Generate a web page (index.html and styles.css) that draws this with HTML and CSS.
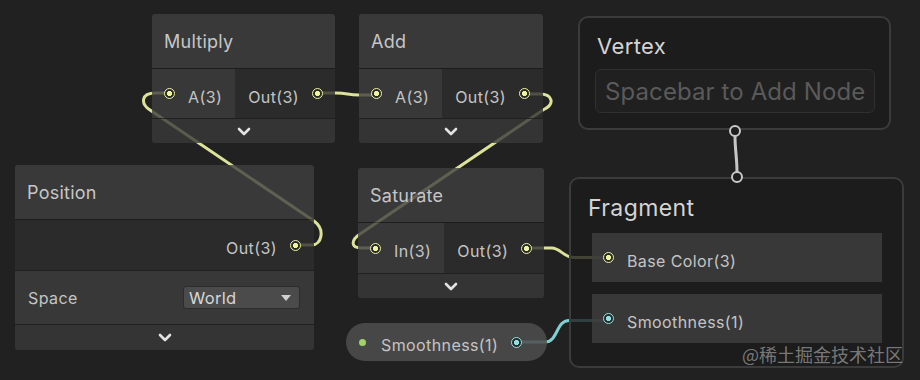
FILE: index.html
```html
<!DOCTYPE html>
<html lang="en">
<head>
    <meta charset="UTF-8">
    <meta name="viewport" content="width=device-width, initial-scale=1.0">
    <title>Shader Graph</title>
    <link rel="stylesheet" href="styles.css">
</head>
<body>
    <div class="graph">
        <!-- edges sit under the nodes, nodes are a bit see-through -->
        <svg class="wires" width="920" height="380" viewBox="0 0 920 380">
            <path class="wire wire-v3" d="M296 245 H312 C321 245 326 230 314 221 L150 110 C141 104 140 93 156 93 H169"/>
            <path class="wire wire-v3" d="M316 93 H336 C348 93 347 95 359 95 H377"/>
            <path class="wire wire-v3" d="M524 94 H540 C552 94 556 104 543 110 L360 234 C351 240 350 248 362 248 H376"/>
            <path class="wire wire-v3" d="M526 248 H552 C560 248 564 257.5 574 257.5 H609"/>
            <path class="wire wire-v1" d="M517 342 H545 C558 342 556 320.5 569 320.5 H609"/>
        </svg>

        <div class="node node-multiply">
            <div class="node-title">Multiply</div>
            <div class="node-ports">
                <div class="inputs"><span class="port port-v3"></span><span class="label">A(3)</span></div>
                <div class="outputs"><span class="label">Out(3)</span><span class="port port-v3"></span></div>
            </div>
            <div class="node-collapse">
                <svg width="14" height="9" viewBox="0 0 14 9"><path class="chevron" d="M2 2 L7 7 L12 2"/></svg>
            </div>
        </div>

        <div class="node node-add">
            <div class="node-title">Add</div>
            <div class="node-ports">
                <div class="inputs"><span class="port port-v3"></span><span class="label">A(3)</span></div>
                <div class="outputs"><span class="label">Out(3)</span><span class="port port-v3"></span></div>
            </div>
            <div class="node-collapse">
                <svg width="14" height="9" viewBox="0 0 14 9"><path class="chevron" d="M2 2 L7 7 L12 2"/></svg>
            </div>
        </div>

        <div class="node node-position">
            <div class="node-title">Position</div>
            <div class="node-ports ports-tall">
                <div class="outputs"><span class="label">Out(3)</span><span class="port port-v3"></span></div>
            </div>
            <div class="node-field">
                <span class="field-name">Space</span>
                <div class="dropdown"><span>World</span><span class="dropdown-arrow"></span></div>
            </div>
            <div class="node-collapse collapse-tall">
                <svg width="14" height="9" viewBox="0 0 14 9"><path class="chevron" d="M2 2 L7 7 L12 2"/></svg>
            </div>
        </div>

        <div class="node node-saturate">
            <div class="node-title">Saturate</div>
            <div class="node-ports ports-tall">
                <div class="inputs"><span class="port port-v3"></span><span class="label">In(3)</span></div>
                <div class="outputs"><span class="label">Out(3)</span><span class="port port-v3"></span></div>
            </div>
            <div class="node-collapse">
                <svg width="14" height="9" viewBox="0 0 14 9"><path class="chevron" d="M2 2 L7 7 L12 2"/></svg>
            </div>
        </div>

        <div class="context context-vertex">
            <div class="context-title">Vertex</div>
            <div class="context-empty">Spacebar to Add Node</div>
        </div>

        <div class="context context-fragment">
            <div class="context-title">Fragment</div>
            <div class="block"><span class="port port-v3"></span><span class="label">Base Color(3)</span></div>
            <div class="block"><span class="port port-v1"></span><span class="label">Smoothness(1)</span></div>
        </div>

        <div class="property">
            <span class="property-dot"></span>
            <span class="label property-name">Smoothness(1)</span>
            <span class="port port-v1"></span>
        </div>

        <svg class="overlay" width="920" height="380" viewBox="0 0 920 380">
            <path class="flow" d="M735 136 C735 150 737 158 737 172"/>
            <circle class="flow-port" cx="735" cy="131" r="5"/>
            <circle class="flow-port" cx="737" cy="177" r="5"/>
        </svg>

        <div class="watermark">@稀土掘金技术社区</div>
    </div>
</body>
</html>
```

FILE: styles.css
```css
* {
    box-sizing: border-box;
    margin: 0;
    padding: 0;
}

body {
    background: #212121;
    font-family: Inter, "Noto Sans", sans-serif;
    color: #c4c4c4;
}

.graph {
    position: relative;
    width: 920px;
    height: 380px;
    overflow: hidden;
    background: #212121;
}

.wires,
.overlay {
    position: absolute;
    left: 0;
    top: 0;
}

.overlay {
    z-index: 3;
}

.wire {
    fill: none;
    stroke-width: 3;
    stroke-linecap: round;
    stroke-linejoin: round;
}

.wire-v3 {
    stroke: #dce29a;
}

.wire-v1 {
    stroke: #80cfd1;
}

.flow {
    fill: none;
    stroke: #c6c6c6;
    stroke-width: 3;
    stroke-linecap: round;
}

.flow-port {
    fill: #1e1e1e;
    stroke: #c8c8c8;
    stroke-width: 2;
}

.label {
    padding-top: 6px;
    font-size: 16px;
    letter-spacing: 0.4px;
    white-space: nowrap;
}

/* nodes */
.node {
    position: absolute;
    z-index: 1;
    display: flex;
    flex-direction: column;
    border-radius: 3px;
    overflow: hidden;
}

.node-multiply { left: 152px; top: 14px; width: 183px; }
.node-add { left: 359px; top: 14px; width: 184px; }
.node-position { left: 15px; top: 165px; width: 299px; }
.node-saturate { left: 358px; top: 168px; width: 186px; }

.node-title {
    height: 54px;
    display: flex;
    align-items: center;
    padding: 0 12px;
    background: rgba(64, 64, 64, 0.8);
    font-size: 18px;
    letter-spacing: 0.25px;
    color: #c6c6c6;
}

.node-ports {
    height: 50px;
    display: flex;
    border-top: 1px solid rgba(28, 28, 28, 0.8);
}

.ports-tall {
    height: 51px;
}

.inputs {
    display: flex;
    align-items: center;
    gap: 13px;
    padding: 0 13px 0 12px;
    background: rgba(62, 62, 62, 0.8);
}

.outputs {
    flex: 1;
    display: flex;
    align-items: center;
    justify-content: flex-end;
    gap: 13px;
    padding: 0 13px;
    background: rgba(46, 46, 46, 0.8);
}

.node-field {
    height: 54px;
    display: flex;
    align-items: center;
    justify-content: space-between;
    padding: 0 14px 0 13px;
    background: rgba(62, 62, 62, 0.8);
    border-top: 1px solid rgba(28, 28, 28, 0.8);
}

.field-name {
    font-size: 16px;
    letter-spacing: 0.4px;
}

.dropdown {
    width: 117px;
    height: 23px;
    display: flex;
    align-items: center;
    justify-content: space-between;
    padding: 0 8px 0 5px;
    background: #4b4b4b;
    border: 1px solid #2c2c2c;
    border-radius: 3px;
    color: #d6d6d6;
    font-size: 16.5px;
    letter-spacing: 0.3px;
}

.dropdown-arrow {
    width: 0;
    height: 0;
    border-left: 5px solid transparent;
    border-right: 5px solid transparent;
    border-top: 6px solid #cfcfcf;
}

.node-collapse {
    height: 25px;
    display: flex;
    align-items: center;
    justify-content: center;
    background: rgba(58, 58, 58, 0.8);
    border-top: 1px solid rgba(28, 28, 28, 0.8);
}

.collapse-tall {
    height: 26px;
}

.chevron {
    fill: none;
    stroke: #e2e2e2;
    stroke-width: 2.6;
    stroke-linecap: round;
    stroke-linejoin: round;
}

/* ports */
.port {
    flex: none;
    width: 11px;
    height: 11px;
    border-radius: 50%;
    border: 1.8px solid var(--c);
    background: radial-gradient(circle, var(--c) 0 2.3px, #2a2a2a 2.9px);
}

.port-v3 {
    --c: #eef4a0;
}

.port-v1 {
    --c: #8ce2e5;
}

/* master stack */
.context {
    position: absolute;
    z-index: 1;
    display: flex;
    flex-direction: column;
    border: 2px solid #3b3b3b;
    border-radius: 10px;
    background: rgba(28, 28, 28, 0.8);
}

.context-vertex {
    left: 578px;
    top: 16px;
    width: 313px;
    height: 114px;
    padding: 14px 14px 15px 15px;
}

.context-fragment {
    left: 569px;
    top: 177px;
    width: 335px;
    height: 191px;
    padding: 15px 20px 21px 17px;
}

.context-title {
    height: 28px;
    line-height: 28px;
    font-size: 22px;
    letter-spacing: 0.4px;
    color: #d4d4d4;
}

.context-vertex .context-title {
    padding-left: 2px;
}

.context-fragment .context-title {
    font-size: 23px;
}

.context-empty {
    margin-top: 9px;
    height: 44px;
    display: flex;
    align-items: center;
    padding-left: 9px;
    border: 1px solid #303030;
    border-radius: 6px;
    background: #202020;
    font-size: 24px;
    letter-spacing: 0.1px;
    color: #5a5a5a;
    white-space: nowrap;
    overflow: hidden;
}

.block {
    margin-left: 4px;
    height: 49px;
    display: flex;
    align-items: center;
    gap: 13px;
    padding-left: 11px;
    background: rgba(64, 64, 64, 0.8);
}

.context-fragment .context-title + .block {
    margin-top: 11px;
}

.block + .block {
    margin-top: 12px;
}

/* blackboard property */
.property {
    position: absolute;
    z-index: 1;
    left: 346px;
    top: 323px;
    width: 201px;
    height: 38px;
    display: flex;
    align-items: center;
    padding: 0 25px 0 13px;
    border-radius: 19px;
    background: rgba(78, 78, 78, 0.85);
}

.property-dot {
    flex: none;
    width: 7px;
    height: 7px;
    border-radius: 50%;
    background: #9fd267;
}

.property-name {
    margin: 0 13px 0 15px;
}

.watermark {
    position: absolute;
    z-index: 4;
    right: 17px;
    top: 342px;
    font-family: "Noto Sans CJK SC", "Noto Sans", sans-serif;
    font-size: 18px;
    line-height: 24px;
    color: rgba(200, 200, 200, 0.55);
}
```
